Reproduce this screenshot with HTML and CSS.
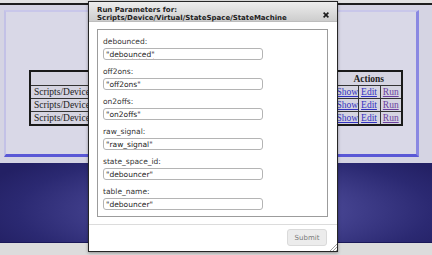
FILE: index.html
```html
<!DOCTYPE html>
<html>
<head>
<meta charset="utf-8">
<title>Run Parameters</title>
<link rel="stylesheet" href="styles.css">
</head>
<body>
<div class="topbar"></div>
<div class="main">
  <div class="panel">
    <table class="scripts">
      <colgroup>
        <col class="c-name"><col class="c-desc"><col class="c-show"><col class="c-edit"><col class="c-run">
      </colgroup>
      <tr><th></th><th></th><th colspan="3">Actions</th></tr>
      <tr><td class="name">Scripts/Device</td><td></td><td class="act"><a href="#">Show</a></td><td class="act"><a href="#">Edit</a></td><td class="act"><a class="visited" href="#">Run</a></td></tr>
      <tr><td class="name">Scripts/Device</td><td></td><td class="act"><a href="#">Show</a></td><td class="act"><a href="#">Edit</a></td><td class="act"><a class="visited" href="#">Run</a></td></tr>
      <tr><td class="name">Scripts/Device</td><td></td><td class="act"><a href="#">Show</a></td><td class="act"><a href="#">Edit</a></td><td class="act"><a class="visited" href="#">Run</a></td></tr>
    </table>
  </div>
</div>
<div class="navy"></div>
<div class="bottombar"></div>

<div class="dlg">
  <div class="dlg-title">
    <div>Run Parameters for:</div>
    <div>Scripts/Device/Virtual/StateSpace/StateMachine</div>
    <svg class="close" width="6" height="6" viewBox="0 0 6 6"><path d="M0.6 0.6L5.4 5.4M5.4 0.6L0.6 5.4" stroke="#1a1a1a" stroke-width="1.6"/></svg>
  </div>
  <div class="dlg-body">
    <div class="fields">
      <div class="field"><label>debounced:</label><input class="misspelled" type="text" value="&quot;debounced&quot;"></div>
      <div class="field"><label>off2ons:</label><input type="text" value="&quot;off2ons&quot;"></div>
      <div class="field"><label>on2offs:</label><input type="text" value="&quot;on2offs&quot;"></div>
      <div class="field"><label>raw_signal:</label><input type="text" value="&quot;raw_signal&quot;"></div>
      <div class="field"><label>state_space_id:</label><input type="text" value="&quot;debouncer&quot;"></div>
      <div class="field"><label>table_name:</label><input type="text" value="&quot;debouncer&quot;"></div>
    </div>
  </div>
  <div class="dlg-footer">
    <button type="button">Submit</button>
  </div>
  <svg class="grip" width="8" height="8" viewBox="0 0 8 8"><path d="M8 1L1 8M8 4L4 8M8 7L7 8" stroke="#888" stroke-width="0.8"/></svg>
</div>
</body>
</html>
```
FILE: styles.css
```css
html, body {
  margin: 0;
  padding: 0;
}
body {
  width: 432px;
  height: 255px;
  overflow: hidden;
  background: #dcdcdc;
  font-family: "Liberation Serif", serif;
  position: relative;
}
.topbar {
  height: 3px;
  background: #e2e2e2;
  border-bottom: 2px solid #1e1e1e;
}
.main {
  height: 158px;
  background: #d5d4e3;
  padding: 5px 13px 0 4px;
  box-sizing: border-box;
}
.panel {
  height: 147px;
  box-sizing: border-box;
  background: #d9d8e7;
  border-left: 2px solid #c3c1e6;
  border-top: 2px solid #c9c7ea;
  border-right: 3px solid #8a88e2;
  border-bottom: 3px solid #5a58d6;
  padding: 58px 0 0 23px;
}
.scripts {
  border-collapse: collapse;
  table-layout: fixed;
  width: 372px;
  border: 2px solid #1a1a1a;
  font-size: 9.5px;
  line-height: 12px;
  color: #222;
}
.c-name { width: 68px; }
.c-desc { width: 238px; }
.c-show { width: 22px; }
.c-edit { width: 22px; }
.c-run { width: 22px; }
.scripts th, .scripts td {
  border: 1px solid #333;
  background: #d5d4e1;
  padding: 0;
  white-space: nowrap;
  overflow: hidden;
}
.scripts th {
  height: 13px;
  font-weight: bold;
  text-align: center;
}
.scripts td {
  height: 12px;
}
.scripts td.name {
  text-align: left;
  padding-left: 3px;
}
.scripts td.act {
  text-align: center;
}
.scripts a {
  color: #3232c0;
}
.scripts a.visited {
  color: #6b3f9e;
}
.navy {
  height: 80px;
  background: radial-gradient(ellipse 60% 90% at 52% 60%, #5d5ca8 0%, #44428f 45%, #2b2972 80%, #232064 100%);
  border-bottom: 1px solid #1a1858;
  box-sizing: border-box;
}
.bottombar {
  height: 12px;
  background: #dcdcdc;
}

/* dialog overlay */
.dlg {
  position: absolute;
  left: 88px;
  top: 1px;
  width: 250px;
  height: 251px;
  box-sizing: border-box;
  border: 1px solid #262626;
  background: #fff;
  box-shadow: 0 1px 3px rgba(0,0,0,0.35);
  font-family: "DejaVu Sans", Verdana, sans-serif;
  display: flex;
  flex-direction: column;
}
.dlg-title {
  position: relative;
  height: 20px;
  box-sizing: border-box;
  padding: 4px 0 0 8px;
  background: linear-gradient(#ededed, #cdcdcd);
  border-bottom: 1px solid #bdbdbd;
  font-weight: bold;
  font-size: 7px;
  line-height: 8px;
  color: #1e1e1e;
}
.close {
  position: absolute;
  right: 8px;
  top: 10px;
}
.dlg-body {
  padding: 7px 9px 0 8px;
}
.fields {
  height: 188px;
  box-sizing: border-box;
  border: 1px solid #9c9c9c;
  padding: 7px 5px 0 5px;
  display: flex;
  flex-direction: column;
  gap: 7px;
}
.field {
  display: flex;
  flex-direction: column;
  gap: 1px;
}
.field label {
  font-size: 7.5px;
  line-height: 10px;
  height: 10px;
  color: #333;
}
.field input {
  width: 160px;
  height: 12px;
  box-sizing: border-box;
  border: 1px solid #b4b4b4;
  border-radius: 3px;
  padding: 0 2px;
  margin: 0;
  font-family: "DejaVu Sans", Verdana, sans-serif;
  font-size: 7.5px;
  color: #222;
  background: #fff;
  outline: none;
}
.field input.misspelled {
  text-decoration: underline wavy #e03030;
  text-decoration-thickness: 1px;
}
.dlg-footer {
  margin-top: 7px;
  flex: 1;
  border-top: 1px solid #dcdcdc;
  display: flex;
  justify-content: flex-end;
  align-items: flex-start;
  padding: 4px 10px 0 0;
}
.dlg-footer button {
  width: 40px;
  height: 17px;
  border: 1px solid #dadada;
  border-radius: 3px;
  background: #ececec;
  color: #7a7a7a;
  font-family: "DejaVu Sans", Verdana, sans-serif;
  font-size: 7px;
  padding: 0;
}
.grip {
  position: absolute;
  right: 0;
  bottom: 0;
}
```
